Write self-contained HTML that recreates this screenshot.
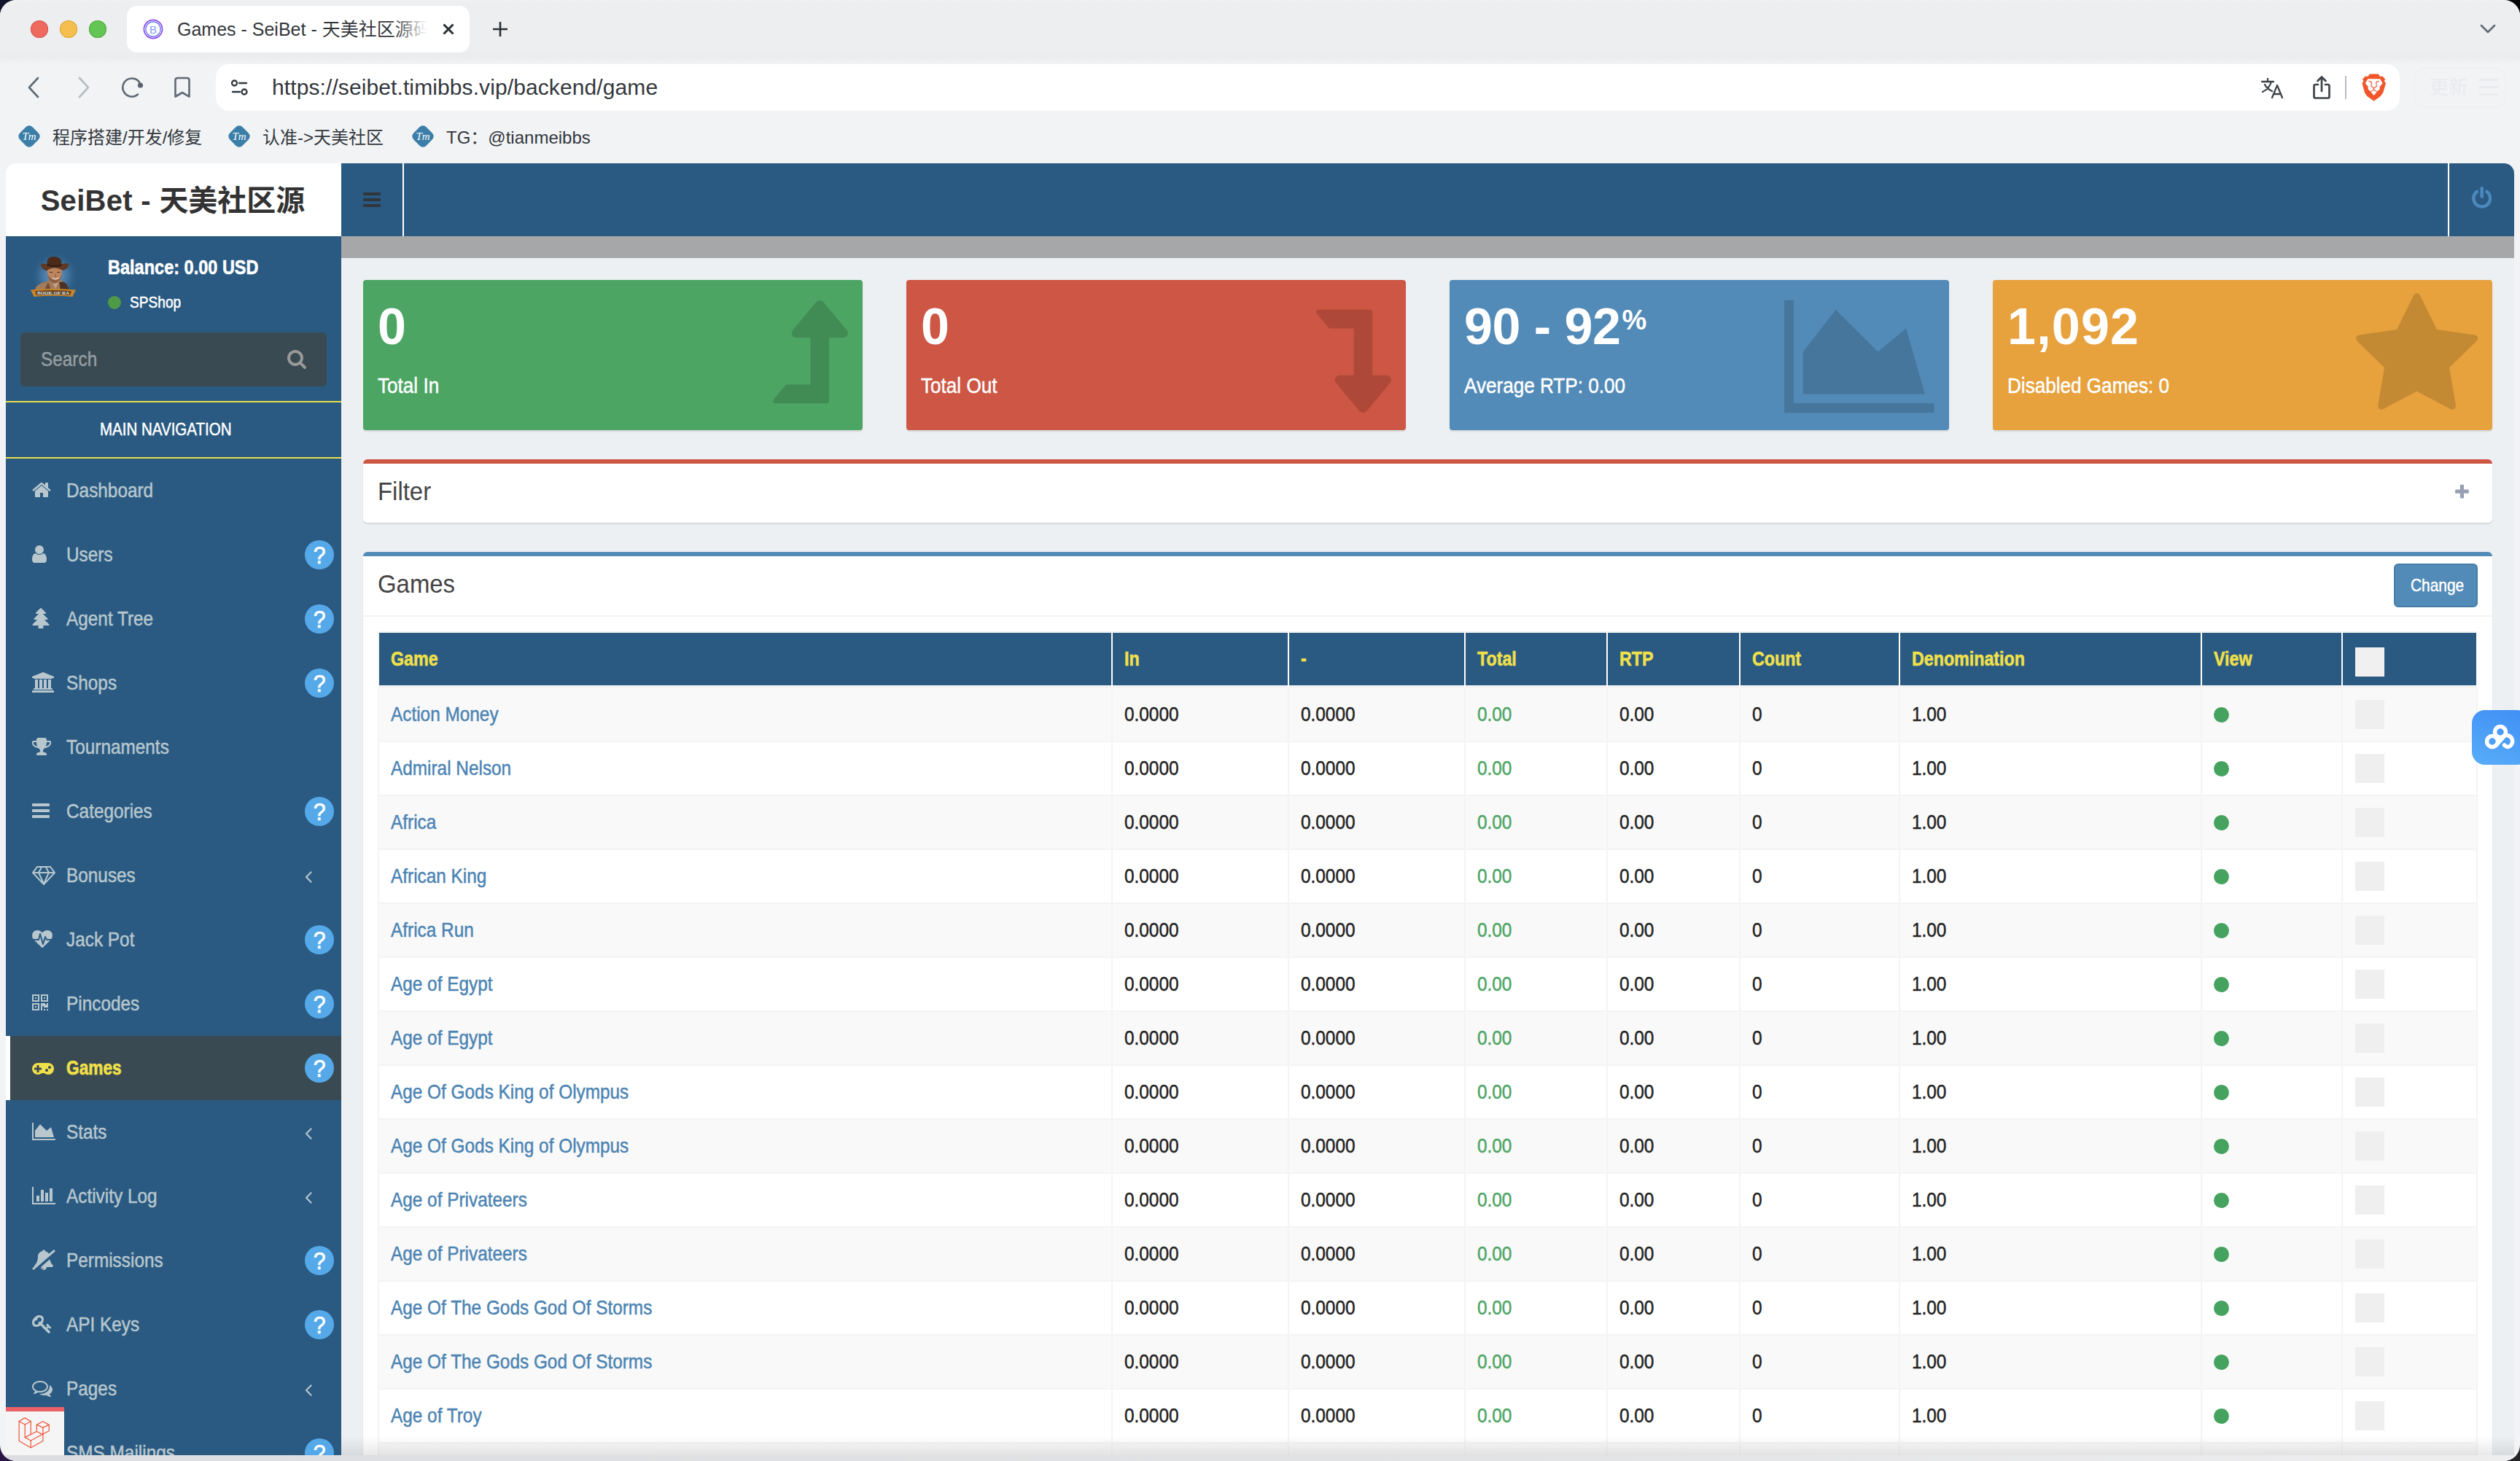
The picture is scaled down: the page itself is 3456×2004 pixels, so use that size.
<!DOCTYPE html>
<html lang="en"><head><meta charset="utf-8"><title>Games - SeiBet</title>
<style>
*{box-sizing:border-box;margin:0;padding:0}
html,body{width:3456px;height:2004px;overflow:hidden}
body{background:linear-gradient(90deg,#2b1446 0,#2b1446 50%,#242426 50%) 0 100%/100% 50% no-repeat,linear-gradient(90deg,#11142b 0,#11142b 50%,#050507 50%) 0 0/100% 50% no-repeat,#11142b;font-family:"Liberation Sans","Noto Sans CJK SC",sans-serif;color:#333;position:relative}
svg.fa{display:inline-block;fill:currentColor;vertical-align:top}
.cn{display:inline-block;transform:scaleX(.87);transform-origin:0 50%;white-space:nowrap;-webkit-text-stroke:.5px currentColor}
#win{position:absolute;left:0;top:0;width:3456px;height:2004px;border-radius:22px;background:#f1f3f5;overflow:hidden}
#tabbar{position:absolute;left:0;top:0;width:3456px;height:88px;background:linear-gradient(180deg,#f0f1f3 0,#edeef0 6%,#edeef0 78%,#ebecee 88%,#f1f3f5 100%)}
.tl{position:absolute;top:28px;width:24px;height:24px;border-radius:50%}
#tab{position:absolute;left:174px;top:8px;width:470px;height:64px;border-radius:14px;background:#fff}
#tabtitle{position:absolute;left:243px;top:25px;font-size:25px;line-height:30px;color:#33373c;white-space:nowrap;width:342px;overflow:hidden}
#tabfade{position:absolute;left:540px;top:12px;width:46px;height:56px;background:linear-gradient(90deg,rgba(255,255,255,0),#fff)}
#urlbar{position:absolute;left:296px;top:88px;width:2995px;height:64px;border-radius:18px;background:#fff}
#url{position:absolute;left:373px;top:102px;font-size:30px;line-height:36px;color:#33373c;white-space:nowrap;letter-spacing:.1px}
.bm{position:absolute;top:172px;font-size:24px;line-height:34px;color:#33373c;white-space:nowrap}
.ci{position:absolute;overflow:visible}
#page{position:absolute;left:8px;top:224px;width:3440px;height:1772px;border-radius:14px 14px 0 0;background:#edf0f3;overflow:hidden}
#logo{position:absolute;left:0;top:0;width:460px;height:100px;background:#fff;text-align:center;font-weight:bold;font-size:40px;line-height:100px;color:#333;white-space:nowrap}
#logo span{display:inline-block;position:relative;top:1px;left:-1px}
#nav{position:absolute;left:460px;top:0;width:2980px;height:100px;background:#2a5a82}
#tog{position:absolute;left:0;top:0;width:86px;height:100px;border-right:2px solid #fff}
#tog svg{position:absolute;left:30px;top:36px}
#pow{position:absolute;right:0;top:0;width:91px;height:100px;border-left:2px solid #fff}
#pow svg{position:absolute;left:30.900px;top:31.800px}
#band{position:absolute;left:460px;top:100px;width:2980px;height:30px;background:#a5a7a8}
#side{position:absolute;left:0;top:100px;width:460px;height:1700px;background:#2a5a82;color:#fff}
#user{position:absolute;left:0;top:0;width:460px;height:130px}
#ava{position:absolute;left:22px;top:16px;width:90px;height:80px}
#bal{position:absolute;left:140px;top:26px;font-size:28px;line-height:34px;font-weight:bold;color:#fff}
#shop{position:absolute;left:140px;top:78px;font-size:22px;line-height:26px;color:#fff}
#shop i{position:absolute;left:0;top:4px;width:18px;height:18px;border-radius:50%;background:#4f9a47}
#shop span{position:absolute;left:30px;top:0}
#search{position:absolute;left:20px;top:132px;width:420px;height:74px;border-radius:6px;background:#3a4a52;color:#949ea3;font-size:28px;line-height:74px}
#search span{position:absolute;left:28px;top:0}
#search svg{position:absolute;left:366px;top:22px;fill:#929ca1}
#mainnav{position:absolute;left:0;top:226px;width:460px;height:79px;border-top:2px solid #e8e04a;border-bottom:2px solid #e8e04a;font-size:24px;line-height:74px;color:#fff}
#mainnav span{position:absolute;left:129px;top:0}
#menu{position:absolute;left:0;top:305px;width:460px;list-style:none}
.mi{position:relative;height:88px;font-size:28px;line-height:88px;color:#b8c7ce}
.mi .ic{position:absolute;left:36px;top:29px;width:40px;height:28px}
.mi .lbl{position:absolute;left:83px;top:0}
.mi .q{position:absolute;left:410px;top:24px;width:40px;height:40px;border-radius:50%;background:#55a9e9;color:#fff;text-align:center;line-height:40px;font-size:33px;font-weight:normal;-webkit-text-stroke:.7px #fff}
.mi .q b{display:inline-block;font-weight:normal;transform:scaleX(.92);position:relative;top:1px}
.mi .ang{position:absolute;left:410px;top:31px;width:20px;height:28px}
.mi.active{background:#3a4a52;border-left:6px solid #fff;color:#f0e04a;font-weight:bold}
.mi.active .ic{left:30px}
.mi.active .lbl{left:77px}
.mi.active .q{left:404px}
#content{position:absolute;left:460px;top:130px;width:2980px;height:1700px}
.sb{position:absolute;top:30px;width:685px;height:206px;border-radius:4px;color:#fff;box-shadow:0 2px 2px rgba(0,0,0,.1);overflow:hidden}
.sb h3{position:absolute;left:20px;top:22px;font-size:70px;line-height:84px;font-weight:bold;white-space:nowrap}
.sb h3 sup{font-size:38px;position:relative;top:-20px;vertical-align:baseline;margin-left:2px}
.sb p{position:absolute;left:20px;top:124px;font-size:30px;line-height:42px}
.sb .bi{position:absolute;top:15px;right:20px}
.box{position:absolute;left:30px;width:2920px;background:#fff;border-radius:6px;box-shadow:0 2px 2px rgba(0,0,0,.1)}
#fbox{top:276px;height:87px;border-top:6px solid #cd5644}
#gbox{top:403px;height:1400px;border-top:6px solid #538bb8}
.bh{position:relative;height:80px}
#gbox .bh{height:83px;border-bottom:2px solid #f4f4f4}
.bt{position:absolute;left:20px;top:18px;font-size:35px;line-height:40px;color:#444;transform:scaleX(.94);transform-origin:0 50%}
.plus{position:absolute;right:32px;top:27px}
.btn{position:absolute;right:20px;top:10px;width:115px;height:60px;border-radius:6px;background:#538bb8;border:2px solid #467ca8;color:#fff;font-size:24px;line-height:56px}
.btn span{position:absolute;left:21px;top:0}
.bb{position:absolute;left:20px;top:103px;width:2880px;border-left:2px solid #f4f4f4;border-top:2px solid #f4f4f4}
table{border-collapse:separate;border-spacing:0;table-layout:fixed;width:2878px;font-size:28px;line-height:40px}
th{height:76px;background:#2a5a82;color:#f0e04a;font-weight:bold;text-align:left;padding:16px 0 16px 16px;position:relative;border-right:2px solid #fff;border-bottom:4px solid #f4f4f4;vertical-align:top;white-space:nowrap}
td{height:74px;padding:16px 0 16px 16px;border-right:2px solid #f4f4f4;border-bottom:2px solid #f4f4f4;vertical-align:top;white-space:nowrap;color:#222}
tr.odd td{background:#f9f9f9}
.lnk{color:#4c84b3}
.grn{color:#4da564}
.dot{display:block;width:21px;height:21px;border-radius:50%;background:#45a35f;margin-top:10px}
.cb{display:block;width:40px;height:40px;background:#efefef;margin-left:1px}
.cb.hd{background:#f0f0f0;position:absolute;left:17px;top:20px;margin:0}
#dbg{position:absolute;left:0;top:1706px;width:80px;height:66px;background:#f5f5f5;border-top:6px solid #ec5f66}
#dbg svg{position:absolute;left:17.300px;top:8.100px}
#fade{position:absolute;left:460px;bottom:0;width:2980px;height:26px;background:linear-gradient(180deg,rgba(0,0,0,0),rgba(0,0,0,.09))}
#strip{position:absolute;left:0;top:1996px;width:3456px;height:8px;background:linear-gradient(90deg,#dcdde0 0,#e2e3e5 60%,#eeeeef 100%)}
#widget{position:absolute;left:3390px;top:974px;width:80px;height:75px;border-radius:18px;background:linear-gradient(200deg,#3f8ef5,#58adf8)}
#widget svg{position:absolute;left:18px;top:20px}

th .cn{transform:scaleX(.83);-webkit-text-stroke:.6px currentColor}
.mi.active .cn{transform:scaleX(.81);-webkit-text-stroke:.7px currentColor}
#bal.cn{transform:scaleX(.84);-webkit-text-stroke:.6px currentColor}
#mainnav .cn{transform:scaleX(.855);-webkit-text-stroke:.5px currentColor}
#logo b{letter-spacing:.3px}

</style></head>
<body>
<div id="win">
 <div id="tabbar"></div>
 <div id="strip"></div>
 <i class="tl" style="left:42px;background:#ee6a5f;box-shadow:inset 0 0 0 1px #d5584d"></i>
 <i class="tl" style="left:82px;background:#f5bf4f;box-shadow:inset 0 0 0 1px #d9a33e"></i>
 <i class="tl" style="left:122px;background:#62c554;box-shadow:inset 0 0 0 1px #51a943"></i>
 <div id="tab"></div>
 <svg class="ci" style="left:196px;top:26px" width="28" height="28" viewBox="0 0 28 28"><circle cx="14" cy="14" r="12.6" fill="none" stroke="#8a3ff0" stroke-width="1.6"/><circle cx="14" cy="14" r="10.2" fill="none" stroke="#5b6cf2" stroke-width="1.2"/><text x="14" y="19.5" text-anchor="middle" font-family="Liberation Sans, sans-serif" font-size="15" fill="#7fa0f5">B</text></svg>
 <div id="tabtitle">Games - SeiBet - 天美社区源码</div>
 <div id="tabfade"></div>
 <svg class="ci" style="left:606px;top:31px" width="18" height="18" viewBox="0 0 18 18"><path d="M2.5 2.5 L15.5 15.5 M15.5 2.5 L2.5 15.5" stroke="#2b2f33" stroke-width="3" fill="none"/></svg>
 <svg class="ci" style="left:675px;top:29px" width="22" height="22" viewBox="0 0 22 22"><path d="M11 1 V21 M1 11 H21" stroke="#2b2f33" stroke-width="2.6" fill="none"/></svg>
 <svg class="ci" style="left:3401px;top:33px" width="22" height="14" viewBox="0 0 22 14"><path d="M2 2 L11 11 L20 2" stroke="#5f6975" stroke-width="2.6" fill="none" stroke-linejoin="round" stroke-linecap="round"/></svg>

 <svg class="ci" style="left:37px;top:105px" width="18" height="30" viewBox="0 0 18 30"><path d="M15 2 L3 15 L15 28" stroke="#5f6975" stroke-width="2.6" fill="none" stroke-linecap="round" stroke-linejoin="round"/></svg>
 <svg class="ci" style="left:106px;top:105px" width="18" height="30" viewBox="0 0 18 30"><path d="M3 2 L15 15 L3 28" stroke="#b7bcc3" stroke-width="2.6" fill="none" stroke-linecap="round" stroke-linejoin="round"/></svg>
 <svg class="ci" style="left:165px;top:104px" width="34" height="32" viewBox="0 0 34 32"><path d="M27.5 11.5 A12.5 12.5 0 1 0 24 25.5" stroke="#5f6975" stroke-width="2.6" fill="none" stroke-linecap="round"/><circle cx="27.5" cy="13" r="3.6" fill="#5a6470"/></svg>
 <svg class="ci" style="left:238px;top:105px" width="24" height="30" viewBox="0 0 24 30"><path d="M2.5 5 Q2.5 2 5.5 2 H18.5 Q21.5 2 21.5 5 V27.5 L12 22 L2.5 27.5 Z" stroke="#5f6975" stroke-width="2.6" fill="none" stroke-linejoin="round"/></svg>
 <div id="urlbar"></div>
 <svg class="ci" style="left:316px;top:108px" width="26" height="24" viewBox="0 0 26 24"><g stroke="#33373c" stroke-width="2.3" fill="none" stroke-linecap="round"><circle cx="5.5" cy="6" r="3.5"/><path d="M12 6 H22"/><circle cx="19" cy="18" r="3.5"/><path d="M3 18 H13"/></g></svg>
 <div id="url">https://seibet.timibbs.vip/backend/game</div>
 <svg class="ci" style="left:3100px;top:105px" width="32" height="32" viewBox="0 0 32 32"><g stroke="#3f4347" stroke-width="2.3" fill="none" stroke-linecap="round" stroke-linejoin="round"><path d="M2 7 H18 M10 3 V7 M15 7 Q12 17 3 21 M6 11 Q9 17 16 20"/><path d="M16 29 L23 12 L30 29 M18.5 24 H27.5"/></g></svg>
 <svg class="ci" style="left:3171px;top:103px" width="26" height="34" viewBox="0 0 26 34"><g stroke="#3f4347" stroke-width="2.7" fill="none" stroke-linecap="round" stroke-linejoin="round"><path d="M8 13 H4.5 Q2.5 13 2.5 15 V29.500 Q2.5 31.5 4.5 31.5 H21.5 Q23.500 31.5 23.500 29.500 V15 Q23.500 13 21.5 13 H18"/><path d="M13 22 V3 M7.5 8 L13 2.5 L18.5 8"/></g></svg>
 <div style="position:absolute;left:3216px;top:104px;width:2px;height:32px;background:#b9bcc1"></div>
 <svg class="ci" style="left:3240px;top:102px" width="31.5" height="36" viewBox="0 0 31.5 36"><path d="M10.100 0 L21.700 0 L24.100 3.600 L27.200 2.900 L30.700 6.700 L29.300 9.100 L31.500 12.200 L27.600 25.500 L24.100 30 L15.600 36 L7 30 L3.600 25.500 L0 12.200 L1.900 9.100 L0.500 6.700 L4.300 2.900 L7.400 3.600 Z" fill="#f1562b" stroke="#f1562b" stroke-width="1" stroke-linejoin="round"/><path d="M7.400 6.200 L24.100 6.200 L27.600 12.200 L23.600 17 L23.600 20.400 L20 23.800 L15.600 28.900 L11.100 23.800 L7.700 20.400 L7.700 17 L3.800 12.200 Z" fill="#fff"/><path d="M8 9.300 L12.600 10.900 L11.400 9.500 Z M23.100 9.300 L18.600 10.900 L19.800 9.500 Z" fill="#f1562b" stroke="#f1562b" stroke-width=".5"/><path d="M12.500 10.800 L11.800 16.300 L15.600 19 L19.300 16.300 L18.700 10.800 M15.600 19 V21 M11.300 23.600 L15.600 21 L19.900 23.600" fill="none" stroke="#e0562e" stroke-width="1.100" stroke-linejoin="round" stroke-linecap="round"/></svg>
 <div style="position:absolute;left:3310px;top:92px;width:128px;height:56px;border-radius:16px;border:2px solid #eef0f3;color:#e9ebee;font-size:26px;line-height:52px;padding-left:20px;white-space:nowrap">更新</div>
 <div style="position:absolute;left:3400px;top:108px;width:26px;height:3px;background:#e9ebee;box-shadow:0 10px 0 #e9ebee,0 20px 0 #e9ebee"></div>

 <svg class="ci bmi" style="left:24px;top:171px" width="32" height="32" viewBox="0 0 32 32"><rect x="3.75" y="3.75" width="24.5" height="24.5" rx="6.5" transform="rotate(45 16 16)" fill="#3b7ea8"/><text x="16" y="21" text-anchor="middle" font-family="Liberation Serif, serif" font-style="italic" font-size="15" fill="#fff">Tm</text></svg>
 <div class="bm" style="left:72px">程序搭建/开发/修复</div>
 <svg class="ci bmi" style="left:312px;top:171px" width="32" height="32" viewBox="0 0 32 32"><rect x="3.75" y="3.75" width="24.5" height="24.5" rx="6.5" transform="rotate(45 16 16)" fill="#3b7ea8"/><text x="16" y="21" text-anchor="middle" font-family="Liberation Serif, serif" font-style="italic" font-size="15" fill="#fff">Tm</text></svg>
 <div class="bm" style="left:360px">认准-&gt;天美社区</div>
 <svg class="ci bmi" style="left:564px;top:171px" width="32" height="32" viewBox="0 0 32 32"><rect x="3.75" y="3.75" width="24.5" height="24.5" rx="6.5" transform="rotate(45 16 16)" fill="#3b7ea8"/><text x="16" y="21" text-anchor="middle" font-family="Liberation Serif, serif" font-style="italic" font-size="15" fill="#fff">Tm</text></svg>
 <div class="bm" style="left:612px">TG：@tianmeibbs</div>
</div>


<div id="page">
 <div id="logo"><span><b>SeiBet - </b>天美社区源</span></div>
 <div id="nav">
   <div id="tog"><svg class="fa" viewBox="0 0 1536 1792" style="width:24.00px;height:28px;fill:#30373c;"><path d="M1536 1344V1472Q1536 1498 1517 1517Q1498 1536 1472 1536H64Q38 1536 19 1517Q0 1498 0 1472V1344Q0 1318 19 1299Q38 1280 64 1280H1472Q1498 1280 1517 1299Q1536 1318 1536 1344ZM1536 832V960Q1536 986 1517 1005Q1498 1024 1472 1024H64Q38 1024 19 1005Q0 986 0 960V832Q0 806 19 787Q38 768 64 768H1472Q1498 768 1517 787Q1536 806 1536 832ZM1536 320V448Q1536 474 1517 493Q1498 512 1472 512H64Q38 512 19 493Q0 474 0 448V320Q0 294 19 275Q38 256 64 256H1472Q1498 256 1517 275Q1536 294 1536 320Z"/></svg></div>
   <div id="pow"><svg class="fa" viewBox="0 0 1536 1792" style="width:27.43px;height:32px;fill:#4b88be;"><path d="M1536 896Q1536 1052 1475 1194Q1414 1336 1311 1439Q1208 1542 1066 1603Q924 1664 768 1664Q612 1664 470 1603Q328 1542 225 1439Q122 1336 61 1194Q0 1052 0 896Q0 714 80 553Q161 392 307 283Q350 251 402 258Q455 265 486 308Q518 350 510 402Q503 455 461 487Q363 561 310 668Q256 775 256 896Q256 1000 296 1094Q337 1189 406 1258Q475 1327 570 1368Q664 1408 768 1408Q872 1408 966 1368Q1061 1327 1130 1258Q1199 1189 1240 1094Q1280 1000 1280 896Q1280 775 1226 668Q1173 561 1075 487Q1033 455 1026 402Q1018 350 1050 308Q1081 265 1134 258Q1187 251 1229 283Q1375 392 1456 553Q1536 714 1536 896ZM896 128V768Q896 820 858 858Q820 896 768 896Q716 896 678 858Q640 820 640 768V128Q640 76 678 38Q716 0 768 0Q820 0 858 38Q896 76 896 128Z"/></svg></div>
 </div>
 <div id="band"></div>
 <div id="side">
   <div id="user">
     <div id="ava"><svg viewBox="0 0 90 80" width="90" height="80"><defs><radialGradient id="ag" cx="50%" cy="50%" r="50%"><stop offset="0" stop-color="#9cc4ea" stop-opacity=".7"/><stop offset="0.55" stop-color="#6a9fd0" stop-opacity=".38"/><stop offset="1" stop-color="#2a5a82" stop-opacity="0"/></radialGradient></defs><circle cx="45" cy="38" r="33" fill="url(#ag)"/><path d="M17.500 58 Q20 49 33 46.500 L40 43 L52 43 L57 46.500 Q63 49 64.500 58 Z" fill="#a57a58"/><path d="M51 47 L57 46.500 Q63 49 64.500 58 L53 58 Z" fill="#4a3326"/><path d="M31 58 L36 47 L40 58 Z" fill="#6e4d38"/><path d="M40 44 L46 56 L52 44 Z" fill="#c9a184"/><path d="M34.500 30 Q34 27 36 27 L54 27 Q55.500 27 55 31 Q55 42 50 46.500 Q45.500 50.500 41 47 Q35.500 42 34.500 30Z" fill="#bb8560"/><path d="M35 36 Q36.500 44 41 47 Q45.500 50.500 50 46.500 Q54 43 55 36 Q52 43.500 46 44 Q39 43.500 35 36Z" fill="#8c5d42"/><path d="M38 33.300 L42 33.800 M48.500 33.800 L52.500 33.300" stroke="#4a2f22" stroke-width="1.100" fill="none"/><path d="M45.800 35 L46.600 39 L44.800 39.300" stroke="#8c5d42" stroke-width=".8" fill="none"/><path d="M41.500 41.500 Q46 44.500 51.500 41" stroke="#f0dcc8" stroke-width="1.100" fill="none"/><path d="M34.500 23 Q33.500 12 44 12 Q54.500 11.500 54.800 23 Q45 26.500 34.500 23Z" fill="#4a2a19"/><path d="M25.600 22.800 Q29 20.500 34.500 22.500 Q45 26 54.800 22.500 Q61 20 64.700 22.200 Q63.500 29 56 31 Q50 27.500 45 27.500 Q39 27.500 34 31.500 Q27.500 30 25.600 22.800Z" fill="#5e3822"/><path d="M34.500 22.500 Q45 26 54.800 22.500 L54.600 24.500 Q45 28 34.700 24.500Z" fill="#2e1a10"/><path d="M11.900 57.500 Q43 54.500 73.900 57.500 L69.500 67 Q43 64.500 16.500 67 Z" fill="#c8852a"/><path d="M18 59.300 Q43 56.800 68 59.300 L66 65 Q43 62.800 20 65 Z" fill="#6d431b"/><text x="43" y="64.300" text-anchor="middle" font-family="Liberation Serif, serif" font-weight="bold" font-size="6.500" fill="#bfe0f7" textLength="44" lengthAdjust="spacingAndGlyphs">BOOK OF RA</text></svg></div>
     <div id="bal" class="cn">Balance: 0.00 USD</div>
     <div id="shop"><i></i><span class="cn">SPShop</span></div>
   </div>
   <div id="search"><span class="cn">Search</span><svg class="fa" viewBox="0 0 1664 1792" style="width:26.00px;height:28px;fill:#999;"><path d="M1020 1148Q1152 1017 1152 832Q1152 647 1020 516Q889 384 704 384Q519 384 388 516Q256 647 256 832Q256 1017 388 1148Q519 1280 704 1280Q889 1280 1020 1148ZM1664 1664Q1664 1716 1626 1754Q1588 1792 1536 1792Q1482 1792 1446 1754L1103 1412Q924 1536 704 1536Q561 1536 430 1480Q300 1425 206 1330Q111 1236 56 1106Q0 975 0 832Q0 689 56 558Q111 428 206 334Q300 239 430 184Q561 128 704 128Q847 128 978 184Q1108 239 1202 334Q1297 428 1352 558Q1408 689 1408 832Q1408 1052 1284 1231L1627 1574Q1664 1611 1664 1664Z"/></svg></div>
   <div id="mainnav"><span class="cn">MAIN NAVIGATION</span></div>
   <ul id="menu">
<li class="mi"><span class="ic"><svg class="fa" viewBox="0 0 1664 1792" style="width:26.00px;height:28px;"><path d="M1408 992V1472Q1408 1498 1389 1517Q1370 1536 1344 1536H960V1152H704V1536H320Q294 1536 275 1517Q256 1498 256 1472V992Q256 991 256 989Q257 987 257 986L832 512L1407 986Q1408 988 1408 992ZM1631 923 1569 997Q1561 1006 1548 1008H1545Q1532 1008 1524 1001L832 424L140 1001Q128 1009 116 1008Q103 1006 95 997L33 923Q25 913 26 900Q27 886 37 878L756 279Q788 253 832 253Q876 253 908 279L1152 483V288Q1152 274 1161 265Q1170 256 1184 256H1376Q1390 256 1399 265Q1408 274 1408 288V696L1627 878Q1637 886 1638 900Q1639 913 1631 923Z"/></svg></span><span class="cn lbl">Dashboard</span></li>
<li class="mi"><span class="ic"><svg class="fa" viewBox="0 0 1280 1792" style="width:20.00px;height:28px;"><path d="M1280 1399Q1280 1508 1218 1586Q1155 1664 1067 1664H213Q125 1664 62 1586Q0 1508 0 1399Q0 1314 8 1238Q17 1163 40 1086Q63 1010 98 956Q134 901 192 866Q251 832 327 832Q458 960 640 960Q822 960 953 832Q1029 832 1088 866Q1146 901 1182 956Q1217 1010 1240 1086Q1263 1163 1272 1238Q1280 1314 1280 1399ZM912 240Q1024 353 1024 512Q1024 671 912 784Q799 896 640 896Q481 896 368 784Q256 671 256 512Q256 353 368 240Q481 128 640 128Q799 128 912 240Z"/></svg></span><span class="cn lbl">Users</span><span class="q"><b>?</b></span></li>
<li class="mi"><span class="ic"><svg class="fa" viewBox="0 0 1536 1792" style="width:24.00px;height:28px;"><path d="M1440 1536H978Q979 1553 984 1624Q989 1694 989 1732Q989 1757 971 1774Q953 1792 928 1792H608Q583 1792 565 1774Q547 1757 547 1732Q547 1694 552 1624Q557 1553 558 1536H96Q70 1536 51 1517Q32 1498 32 1472Q32 1446 51 1427L453 1024H224Q198 1024 179 1005Q160 986 160 960Q160 934 179 915L581 512H384Q358 512 339 493Q320 474 320 448Q320 422 339 403L723 19Q742 0 768 0Q794 0 813 19L1197 403Q1216 422 1216 448Q1216 474 1197 493Q1178 512 1152 512H955L1357 915Q1376 934 1376 960Q1376 986 1357 1005Q1338 1024 1312 1024H1083L1485 1427Q1504 1446 1504 1472Q1504 1498 1485 1517Q1466 1536 1440 1536Z"/></svg></span><span class="cn lbl">Agent Tree</span><span class="q"><b>?</b></span></li>
<li class="mi"><span class="ic"><svg class="fa" viewBox="0 0 2048 1792" style="width:32.00px;height:28px;"><path d="M960 0 1920 384V512H1792Q1792 538 1772 557Q1751 576 1723 576H197Q169 576 148 557Q128 538 128 512H0V384ZM256 640H512V1408H640V640H896V1408H1024V640H1280V1408H1408V640H1664V1408H1723Q1751 1408 1772 1427Q1792 1446 1792 1472V1536H128V1472Q128 1446 148 1427Q169 1408 197 1408H256ZM1851 1600Q1879 1600 1900 1619Q1920 1638 1920 1664V1792H0V1664Q0 1638 20 1619Q41 1600 69 1600Z"/></svg></span><span class="cn lbl">Shops</span><span class="q"><b>?</b></span></li>
<li class="mi"><span class="ic"><svg class="fa" viewBox="0 0 1664 1792" style="width:26.00px;height:28px;"><path d="M458 883Q384 721 384 512H128V608Q128 686 222 770Q317 854 458 883ZM1536 608V512H1280Q1280 721 1206 883Q1347 854 1442 770Q1536 686 1536 608ZM1664 480V608Q1664 679 1622 751Q1581 823 1510 881Q1440 939 1338 978Q1235 1018 1122 1023Q1080 1077 1027 1118Q989 1152 974 1190Q960 1229 960 1280Q960 1334 990 1371Q1021 1408 1088 1408Q1163 1408 1222 1454Q1280 1499 1280 1568V1632Q1280 1646 1271 1655Q1262 1664 1248 1664H416Q402 1664 393 1655Q384 1646 384 1632V1568Q384 1499 442 1454Q501 1408 576 1408Q643 1408 674 1371Q704 1334 704 1280Q704 1229 690 1190Q675 1152 637 1118Q584 1077 542 1023Q429 1018 326 978Q224 939 154 881Q83 823 42 751Q0 679 0 608V480Q0 440 28 412Q56 384 96 384H384V288Q384 222 431 175Q478 128 544 128H1120Q1186 128 1233 175Q1280 222 1280 288V384H1568Q1608 384 1636 412Q1664 440 1664 480Z"/></svg></span><span class="cn lbl">Tournaments</span></li>
<li class="mi"><span class="ic"><svg class="fa" viewBox="0 0 1536 1792" style="width:24.00px;height:28px;"><path d="M1536 1344V1472Q1536 1498 1517 1517Q1498 1536 1472 1536H64Q38 1536 19 1517Q0 1498 0 1472V1344Q0 1318 19 1299Q38 1280 64 1280H1472Q1498 1280 1517 1299Q1536 1318 1536 1344ZM1536 832V960Q1536 986 1517 1005Q1498 1024 1472 1024H64Q38 1024 19 1005Q0 986 0 960V832Q0 806 19 787Q38 768 64 768H1472Q1498 768 1517 787Q1536 806 1536 832ZM1536 320V448Q1536 474 1517 493Q1498 512 1472 512H64Q38 512 19 493Q0 474 0 448V320Q0 294 19 275Q38 256 64 256H1472Q1498 256 1517 275Q1536 294 1536 320Z"/></svg></span><span class="cn lbl">Categories</span><span class="q"><b>?</b></span></li>
<li class="mi"><span class="ic"><svg class="fa" viewBox="0 0 2048 1792" style="width:32.00px;height:28px;"><path d="M212 768 835 1433 535 768ZM1024 1540 1373 768H675ZM538 640 742 256H480L192 640ZM1213 1433 1836 768H1513ZM683 640H1365L1161 256H887ZM1510 640H1856L1568 256H1306ZM1651 154 2035 666Q2049 684 2048 708Q2047 731 2031 748L1071 1772Q1053 1792 1024 1792Q995 1792 977 1772L17 748Q1 731 0 708Q-1 684 13 666L397 154Q415 128 448 128H1600Q1633 128 1651 154Z"/></svg></span><span class="cn lbl">Bonuses</span><span class="ang"><svg class="fa" viewBox="0 0 640 1792" style="width:10.00px;height:28px;"><path d="M617 567 224 960 617 1353Q627 1363 627 1376Q627 1389 617 1399L567 1449Q557 1459 544 1459Q531 1459 521 1449L55 983Q45 973 45 960Q45 947 55 937L521 471Q531 461 544 461Q557 461 567 471L617 521Q627 531 627 544Q627 557 617 567Z"/></svg></span></li>
<li class="mi"><span class="ic"><svg class="fa" viewBox="0 0 1792 1792" style="width:28.00px;height:28px;"><path d="M1280 1024H1585Q1580 1030 1575 1034Q1570 1039 1566 1042L1563 1046L940 1646Q922 1664 896 1664Q870 1664 852 1646L228 1044Q223 1042 207 1024H576Q598 1024 616 1010Q633 997 638 976L708 695L898 1362Q904 1382 921 1395Q938 1408 960 1408Q981 1408 998 1395Q1015 1382 1021 1362L1167 877L1223 989Q1241 1024 1280 1024ZM1792 596Q1792 741 1689 896H1320L1209 675Q1201 658 1184 648Q1166 638 1147 640Q1102 645 1091 686L962 1116L766 430Q760 410 742 397Q725 384 703 384Q681 384 664 398Q647 411 642 432L526 896H103Q0 741 0 596Q0 376 127 252Q254 128 478 128Q540 128 604 150Q669 171 724 208Q780 244 820 276Q860 308 896 344Q932 308 972 276Q1012 244 1068 208Q1123 171 1188 150Q1252 128 1314 128Q1538 128 1665 252Q1792 376 1792 596Z"/></svg></span><span class="cn lbl">Jack Pot</span><span class="q"><b>?</b></span></li>
<li class="mi"><span class="ic"><svg class="fa" viewBox="0 0 1408 1792" style="width:22.00px;height:28px;"><path d="M384 1152V1280H256V1152ZM384 384V512H256V384ZM1152 384V512H1024V384ZM128 1407H512V1024H128ZM128 640H512V256H128ZM896 640H1280V256H896ZM640 896V1536H0V896ZM1152 1408V1536H1024V1408ZM1408 1408V1536H1280V1408ZM1408 896V1280H1024V1152H896V1536H768V896H1152V1024H1280V896ZM640 128V768H0V128ZM1408 128V768H768V128Z"/></svg></span><span class="cn lbl">Pincodes</span><span class="q"><b>?</b></span></li>
<li class="mi active"><span class="ic"><svg class="fa" viewBox="0 0 1920 1792" style="width:30.00px;height:28px;"><path d="M832 1088V960Q832 946 823 937Q814 928 800 928H608V736Q608 722 599 713Q590 704 576 704H448Q434 704 425 713Q416 722 416 736V928H224Q210 928 201 937Q192 946 192 960V1088Q192 1102 201 1111Q210 1120 224 1120H416V1312Q416 1326 425 1335Q434 1344 448 1344H576Q590 1344 599 1335Q608 1326 608 1312V1120H800Q814 1120 823 1111Q832 1102 832 1088ZM1370 1242Q1408 1205 1408 1152Q1408 1099 1370 1062Q1333 1024 1280 1024Q1227 1024 1190 1062Q1152 1099 1152 1152Q1152 1205 1190 1242Q1227 1280 1280 1280Q1333 1280 1370 1242ZM1626 986Q1664 949 1664 896Q1664 843 1626 806Q1589 768 1536 768Q1483 768 1446 806Q1408 843 1408 896Q1408 949 1446 986Q1483 1024 1536 1024Q1589 1024 1626 986ZM1408 1536Q1216 1536 1070 1408H850Q704 1536 512 1536Q300 1536 150 1386Q0 1236 0 1024Q0 812 150 662Q300 512 512 512H1408Q1620 512 1770 662Q1920 812 1920 1024Q1920 1236 1770 1386Q1620 1536 1408 1536Z"/></svg></span><span class="cn lbl">Games</span><span class="q"><b>?</b></span></li>
<li class="mi"><span class="ic"><svg class="fa" viewBox="0 0 2048 1792" style="width:32.00px;height:28px;"><path d="M2048 1536V1664H0V128H128V1536ZM1664 512 1920 1408H256V832L704 256L1280 832Z"/></svg></span><span class="cn lbl">Stats</span><span class="ang"><svg class="fa" viewBox="0 0 640 1792" style="width:10.00px;height:28px;"><path d="M617 567 224 960 617 1353Q627 1363 627 1376Q627 1389 617 1399L567 1449Q557 1459 544 1459Q531 1459 521 1449L55 983Q45 973 45 960Q45 947 55 937L521 471Q531 461 544 461Q557 461 567 471L617 521Q627 531 627 544Q627 557 617 567Z"/></svg></span></li>
<li class="mi"><span class="ic"><svg class="fa" viewBox="0 0 2048 1792" style="width:32.00px;height:28px;"><path d="M640 896V1408H384V896ZM1024 384V1408H768V384ZM2048 1536V1664H0V128H128V1536ZM1408 640V1408H1152V640ZM1792 256V1408H1536V256Z"/></svg></span><span class="cn lbl">Activity Log</span><span class="ang"><svg class="fa" viewBox="0 0 640 1792" style="width:10.00px;height:28px;"><path d="M617 567 224 960 617 1353Q627 1363 627 1376Q627 1389 617 1399L567 1449Q557 1459 544 1459Q531 1459 521 1449L55 983Q45 973 45 960Q45 947 55 937L521 471Q531 461 544 461Q557 461 567 471L617 521Q627 531 627 544Q627 557 617 567Z"/></svg></span></li>
<li class="mi"><span class="ic"><svg class="fa" viewBox="0 0 2048 1792" style="width:32.00px;height:28px;"><path d="M1558 852Q1619 1208 1856 1408Q1856 1460 1818 1498Q1780 1536 1728 1536H1280Q1280 1642 1205 1717Q1130 1792 1024 1792Q918 1792 844 1718Q769 1643 768 1537ZM1024 1712Q1040 1712 1040 1696Q1040 1680 1024 1680Q965 1680 922 1638Q880 1595 880 1536Q880 1520 864 1520Q848 1520 848 1536Q848 1609 900 1660Q951 1712 1024 1712ZM2026 112Q2034 122 2034 136Q2033 149 2023 158L151 1780Q141 1788 128 1787Q114 1786 106 1776L22 1680Q14 1670 14 1656Q15 1643 25 1635L211 1474Q192 1442 192 1408Q242 1366 283 1320Q324 1274 368 1200Q412 1127 442 1042Q473 957 492 836Q512 715 512 576Q512 424 629 294Q746 163 936 135Q928 116 928 96Q928 56 956 28Q984 0 1024 0Q1064 0 1092 28Q1120 56 1120 96Q1120 116 1112 135Q1236 153 1331 218Q1426 282 1479 375L1897 12Q1907 4 1920 5Q1934 6 1942 16Z"/></svg></span><span class="cn lbl">Permissions</span><span class="q"><b>?</b></span></li>
<li class="mi"><span class="ic"><svg class="fa" viewBox="0 0 1792 1792" style="width:28.00px;height:28px;"><path d="M448 512Q448 554 467 595Q426 576 384 576Q304 576 248 632Q192 688 192 768Q192 848 248 904Q304 960 384 960Q464 960 520 904Q576 848 576 768Q576 726 557 685Q598 704 640 704Q720 704 776 648Q832 592 832 512Q832 432 776 376Q720 320 640 320Q560 320 504 376Q448 432 448 512ZM1683 1216Q1683 1233 1634 1282Q1585 1331 1568 1331Q1559 1331 1540 1315Q1520 1299 1503 1282Q1486 1265 1464 1242Q1443 1219 1440 1216L1344 1312L1564 1532Q1592 1560 1592 1600Q1592 1642 1553 1681Q1514 1720 1472 1720Q1432 1720 1404 1692L733 1021Q557 1152 368 1152Q205 1152 102 1050Q0 947 0 784Q0 624 95 471Q190 318 343 223Q496 128 656 128Q819 128 922 230Q1024 333 1024 496Q1024 685 893 861L1248 1216L1344 1120Q1341 1117 1318 1096Q1295 1074 1278 1057Q1261 1040 1245 1020Q1229 1001 1229 992Q1229 975 1278 926Q1327 877 1344 877Q1357 877 1367 887Q1373 893 1413 932Q1453 970 1495 1011Q1537 1052 1582 1097Q1626 1142 1654 1175Q1683 1208 1683 1216Z"/></svg></span><span class="cn lbl">API Keys</span><span class="q"><b>?</b></span></li>
<li class="mi"><span class="ic"><svg class="fa" viewBox="0 0 1792 1792" style="width:28.00px;height:28px;"><path d="M128 768Q128 850 181 926Q234 1002 330 1058L427 1114L392 1198Q426 1178 454 1159L498 1128L551 1138Q629 1152 704 1152Q857 1152 990 1100Q1123 1048 1202 959Q1280 870 1280 768Q1280 666 1202 577Q1123 488 990 436Q857 384 704 384Q551 384 418 436Q285 488 206 577Q128 666 128 768ZM704 1280Q618 1280 528 1264Q404 1352 250 1392Q214 1401 164 1408H161Q150 1408 140 1400Q131 1392 129 1379Q128 1376 128 1372Q128 1369 128 1366Q129 1363 130 1360Q132 1357 133 1355Q134 1353 136 1350Q139 1346 140 1344Q142 1343 145 1340Q148 1336 149 1335Q154 1329 172 1310Q190 1291 198 1280Q206 1270 220 1252Q235 1233 246 1213Q256 1193 266 1169Q142 1097 71 992Q0 887 0 768Q0 629 94 511Q188 393 350 324Q513 256 704 256Q895 256 1058 324Q1220 393 1314 511Q1408 629 1408 768Q1408 907 1314 1025Q1220 1143 1058 1212Q895 1280 704 1280ZM1526 1425Q1536 1449 1546 1469Q1557 1489 1572 1508Q1586 1526 1594 1536Q1602 1547 1620 1566Q1638 1585 1643 1591Q1644 1592 1647 1596Q1650 1599 1652 1600Q1653 1602 1656 1606Q1658 1609 1659 1611Q1660 1613 1662 1616Q1663 1619 1664 1622Q1664 1625 1664 1628Q1664 1632 1663 1635Q1660 1649 1650 1657Q1640 1665 1628 1664Q1578 1657 1542 1648Q1388 1608 1264 1520Q1174 1536 1088 1536Q817 1536 616 1404Q674 1408 704 1408Q865 1408 1013 1363Q1161 1318 1277 1234Q1402 1142 1469 1022Q1536 902 1536 768Q1536 691 1513 616Q1642 687 1717 794Q1792 901 1792 1024Q1792 1144 1721 1248Q1650 1353 1526 1425Z"/></svg></span><span class="cn lbl">Pages</span><span class="ang"><svg class="fa" viewBox="0 0 640 1792" style="width:10.00px;height:28px;"><path d="M617 567 224 960 617 1353Q627 1363 627 1376Q627 1389 617 1399L567 1449Q557 1459 544 1459Q531 1459 521 1449L55 983Q45 973 45 960Q45 947 55 937L521 471Q531 461 544 461Q557 461 567 471L617 521Q627 531 627 544Q627 557 617 567Z"/></svg></span></li>
<li class="mi"><span class="ic"><svg class="fa" viewBox="0 0 1792 1792" style="width:28.00px;height:28px;"><path d="M1792 710V1504Q1792 1570 1745 1617Q1698 1664 1632 1664H160Q94 1664 47 1617Q0 1570 0 1504V710Q44 759 101 797Q463 1043 598 1142Q655 1184 690 1208Q726 1231 785 1256Q844 1280 895 1280H896H897Q948 1280 1007 1256Q1066 1231 1102 1208Q1137 1184 1194 1142Q1364 1019 1692 797Q1749 758 1792 710ZM1792 416Q1792 495 1743 567Q1694 639 1621 690Q1245 951 1153 1015Q1143 1022 1110 1046Q1078 1069 1056 1084Q1035 1098 1004 1116Q974 1134 947 1143Q920 1152 897 1152H896H895Q872 1152 845 1143Q818 1134 788 1116Q757 1098 736 1084Q714 1069 682 1046Q649 1022 639 1015Q548 951 377 832Q206 714 172 690Q110 648 55 574Q0 501 0 438Q0 360 42 308Q83 256 160 256H1632Q1697 256 1744 303Q1792 350 1792 416Z"/></svg></span><span class="cn lbl">SMS Mailings</span><span class="q"><b>?</b></span></li>
   </ul>
 </div>
 <div id="content">
   <div class="sb" style="left:30px;background:#4da564"><h3>0</h3><p><span class="cn">Total In</span></p><div class="bi"><svg class="fa" viewBox="0 0 1024 1792" style="width:102.86px;height:180px;fill:rgba(0,0,0,0.15);"><path d="M1018 603Q1000 640 960 640H768V1504Q768 1518 759 1527Q750 1536 736 1536H32Q11 1536 3 1518Q-5 1498 7 1483L167 1291Q176 1280 192 1280H512V640H320Q280 640 262 603Q245 566 271 535L591 151Q609 129 640 129Q671 129 689 151L1009 535Q1036 567 1018 603Z"/></svg></div></div>
   <div class="sb" style="left:775px;background:#cd5644"><h3>0</h3><p><span class="cn">Total Out</span></p><div class="bi"><svg class="fa" viewBox="0 0 1024 1792" style="width:102.86px;height:180px;fill:rgba(0,0,0,0.15);"><path d="M32 256H736Q749 256 758 266Q768 275 768 289V1152H960Q1000 1152 1018 1189Q1036 1226 1009 1258L689 1642Q671 1664 640 1664Q609 1664 591 1642L271 1258Q245 1227 262 1189Q280 1152 320 1152H512V512H192Q178 512 167 501L7 309Q-6 295 3 275Q12 256 32 256Z"/></svg></div></div>
   <div class="sb" style="left:1520px;background:#538bb8"><h3 style="letter-spacing:-.5px">90 - 92<sup>%</sup></h3><p><span class="cn">Average RTP: 0.00</span></p><div class="bi"><svg class="fa" viewBox="0 0 2048 1792" style="width:205.71px;height:180px;fill:rgba(0,0,0,0.15);"><path d="M2048 1536V1664H0V128H128V1536ZM1664 512 1920 1408H256V832L704 256L1280 832Z"/></svg></div></div>
   <div class="sb" style="left:2265px;background:#e7a13d"><h3 style="letter-spacing:1.2px">1,092</h3><p><span class="cn">Disabled Games: 0</span></p><div class="bi"><svg class="fa" viewBox="0 0 1664 1792" style="width:167.14px;height:180px;fill:rgba(0,0,0,0.15);"><path d="M1664 647Q1664 669 1638 695L1275 1049L1361 1549Q1362 1556 1362 1569Q1362 1590 1352 1604Q1341 1619 1321 1619Q1302 1619 1281 1607L832 1371L383 1607Q361 1619 343 1619Q322 1619 312 1604Q301 1590 301 1569Q301 1563 303 1549L389 1049L25 695Q0 668 0 647Q0 610 56 601L558 528L783 73Q802 32 832 32Q862 32 881 73L1106 528L1608 601Q1664 610 1664 647Z"/></svg></div></div>

   <div class="box" id="fbox"><div class="bh"><span class="bt">Filter</span><span class="plus"><svg class="fa" viewBox="0 0 1408 1792" style="width:18.86px;height:24px;fill:#97a0b3;"><path d="M1408 736V928Q1408 968 1380 996Q1352 1024 1312 1024H896V1440Q896 1480 868 1508Q840 1536 800 1536H608Q568 1536 540 1508Q512 1480 512 1440V1024H96Q56 1024 28 996Q0 968 0 928V736Q0 696 28 668Q56 640 96 640H512V224Q512 184 540 156Q568 128 608 128H800Q840 128 868 156Q896 184 896 224V640H1312Q1352 640 1380 668Q1408 696 1408 736Z"/></svg></span></div></div>
   <div class="box" id="gbox"><div class="bh"><span class="bt">Games</span><span class="btn"><span class="cn">Change</span></span></div>
     <div class="bb">
       <table>
         <colgroup><col style="width:1006px"><col style="width:242px"><col style="width:242px"><col style="width:195px"><col style="width:182px"><col style="width:219px"><col style="width:414px"><col style="width:193px"><col style="width:185px"></colgroup>
         <thead><tr><th><span class="cn">Game</span></th><th><span class="cn">In</span></th><th><span class="cn">-</span></th><th><span class="cn">Total</span></th><th><span class="cn">RTP</span></th><th><span class="cn">Count</span></th><th><span class="cn">Denomination</span></th><th><span class="cn">View</span></th><th><i class="cb hd"></i></th></tr></thead>
         <tbody>
<tr class="odd"><td><span class="cn lnk">Action Money</span></td><td><span class="cn">0.0000</span></td><td><span class="cn">0.0000</span></td><td><span class="cn grn">0.00</span></td><td><span class="cn">0.00</span></td><td><span class="cn">0</span></td><td><span class="cn">1.00</span></td><td><i class="dot"></i></td><td><i class="cb"></i></td></tr>
<tr><td><span class="cn lnk">Admiral Nelson</span></td><td><span class="cn">0.0000</span></td><td><span class="cn">0.0000</span></td><td><span class="cn grn">0.00</span></td><td><span class="cn">0.00</span></td><td><span class="cn">0</span></td><td><span class="cn">1.00</span></td><td><i class="dot"></i></td><td><i class="cb"></i></td></tr>
<tr class="odd"><td><span class="cn lnk">Africa</span></td><td><span class="cn">0.0000</span></td><td><span class="cn">0.0000</span></td><td><span class="cn grn">0.00</span></td><td><span class="cn">0.00</span></td><td><span class="cn">0</span></td><td><span class="cn">1.00</span></td><td><i class="dot"></i></td><td><i class="cb"></i></td></tr>
<tr><td><span class="cn lnk">African King</span></td><td><span class="cn">0.0000</span></td><td><span class="cn">0.0000</span></td><td><span class="cn grn">0.00</span></td><td><span class="cn">0.00</span></td><td><span class="cn">0</span></td><td><span class="cn">1.00</span></td><td><i class="dot"></i></td><td><i class="cb"></i></td></tr>
<tr class="odd"><td><span class="cn lnk">Africa Run</span></td><td><span class="cn">0.0000</span></td><td><span class="cn">0.0000</span></td><td><span class="cn grn">0.00</span></td><td><span class="cn">0.00</span></td><td><span class="cn">0</span></td><td><span class="cn">1.00</span></td><td><i class="dot"></i></td><td><i class="cb"></i></td></tr>
<tr><td><span class="cn lnk">Age of Egypt</span></td><td><span class="cn">0.0000</span></td><td><span class="cn">0.0000</span></td><td><span class="cn grn">0.00</span></td><td><span class="cn">0.00</span></td><td><span class="cn">0</span></td><td><span class="cn">1.00</span></td><td><i class="dot"></i></td><td><i class="cb"></i></td></tr>
<tr class="odd"><td><span class="cn lnk">Age of Egypt</span></td><td><span class="cn">0.0000</span></td><td><span class="cn">0.0000</span></td><td><span class="cn grn">0.00</span></td><td><span class="cn">0.00</span></td><td><span class="cn">0</span></td><td><span class="cn">1.00</span></td><td><i class="dot"></i></td><td><i class="cb"></i></td></tr>
<tr><td><span class="cn lnk">Age Of Gods King of Olympus</span></td><td><span class="cn">0.0000</span></td><td><span class="cn">0.0000</span></td><td><span class="cn grn">0.00</span></td><td><span class="cn">0.00</span></td><td><span class="cn">0</span></td><td><span class="cn">1.00</span></td><td><i class="dot"></i></td><td><i class="cb"></i></td></tr>
<tr class="odd"><td><span class="cn lnk">Age Of Gods King of Olympus</span></td><td><span class="cn">0.0000</span></td><td><span class="cn">0.0000</span></td><td><span class="cn grn">0.00</span></td><td><span class="cn">0.00</span></td><td><span class="cn">0</span></td><td><span class="cn">1.00</span></td><td><i class="dot"></i></td><td><i class="cb"></i></td></tr>
<tr><td><span class="cn lnk">Age of Privateers</span></td><td><span class="cn">0.0000</span></td><td><span class="cn">0.0000</span></td><td><span class="cn grn">0.00</span></td><td><span class="cn">0.00</span></td><td><span class="cn">0</span></td><td><span class="cn">1.00</span></td><td><i class="dot"></i></td><td><i class="cb"></i></td></tr>
<tr class="odd"><td><span class="cn lnk">Age of Privateers</span></td><td><span class="cn">0.0000</span></td><td><span class="cn">0.0000</span></td><td><span class="cn grn">0.00</span></td><td><span class="cn">0.00</span></td><td><span class="cn">0</span></td><td><span class="cn">1.00</span></td><td><i class="dot"></i></td><td><i class="cb"></i></td></tr>
<tr><td><span class="cn lnk">Age Of The Gods God Of Storms</span></td><td><span class="cn">0.0000</span></td><td><span class="cn">0.0000</span></td><td><span class="cn grn">0.00</span></td><td><span class="cn">0.00</span></td><td><span class="cn">0</span></td><td><span class="cn">1.00</span></td><td><i class="dot"></i></td><td><i class="cb"></i></td></tr>
<tr class="odd"><td><span class="cn lnk">Age Of The Gods God Of Storms</span></td><td><span class="cn">0.0000</span></td><td><span class="cn">0.0000</span></td><td><span class="cn grn">0.00</span></td><td><span class="cn">0.00</span></td><td><span class="cn">0</span></td><td><span class="cn">1.00</span></td><td><i class="dot"></i></td><td><i class="cb"></i></td></tr>
<tr><td><span class="cn lnk">Age of Troy</span></td><td><span class="cn">0.0000</span></td><td><span class="cn">0.0000</span></td><td><span class="cn grn">0.00</span></td><td><span class="cn">0.00</span></td><td><span class="cn">0</span></td><td><span class="cn">1.00</span></td><td><i class="dot"></i></td><td><i class="cb"></i></td></tr>
<tr class="odd"><td><span class="cn lnk">Aladdins Treasure</span></td><td><span class="cn">0.0000</span></td><td><span class="cn">0.0000</span></td><td><span class="cn grn">0.00</span></td><td><span class="cn">0.00</span></td><td><span class="cn">0</span></td><td><span class="cn">1.00</span></td><td><i class="dot"></i></td><td><i class="cb"></i></td></tr>
         </tbody>
       </table>
     </div>
   </div>
 </div>
 <div id="dbg"><svg viewBox="440 420 756 740" width="43.5" height="42.6"><g fill="none" stroke="#f0553a" stroke-width="21" stroke-linejoin="round" stroke-linecap="round"><path d="M460 515 L600 435 L740 515 L600 595 Z"/><path d="M460 515 V985 L740 1145 L1030 985 V665"/><path d="M600 595 V900 L740 975 L1030 820"/><path d="M740 515 V830"/><path d="M600 900 L880 760"/><path d="M740 975 V1145"/><path d="M880 600 L1025 520 L1175 600 L1030 665 Z"/><path d="M880 600 V760 L1030 835"/><path d="M1175 600 V745 L1030 820"/></g></svg></div>
 <div id="fade"></div>
</div>
<div id="widget"><svg viewBox="0 0 44 36" width="44" height="36"><g fill="none" stroke="#fff" stroke-width="5.5" stroke-linecap="round"><circle cx="21" cy="10" r="7.5"/><circle cx="10" cy="23" r="7.5"/><path d="M15.5 28 L27 15 A7.5 7.5 0 1 1 32 30.5 A7.5 7.5 0 0 1 26.5 28"/></g></svg></div>

</body></html>
